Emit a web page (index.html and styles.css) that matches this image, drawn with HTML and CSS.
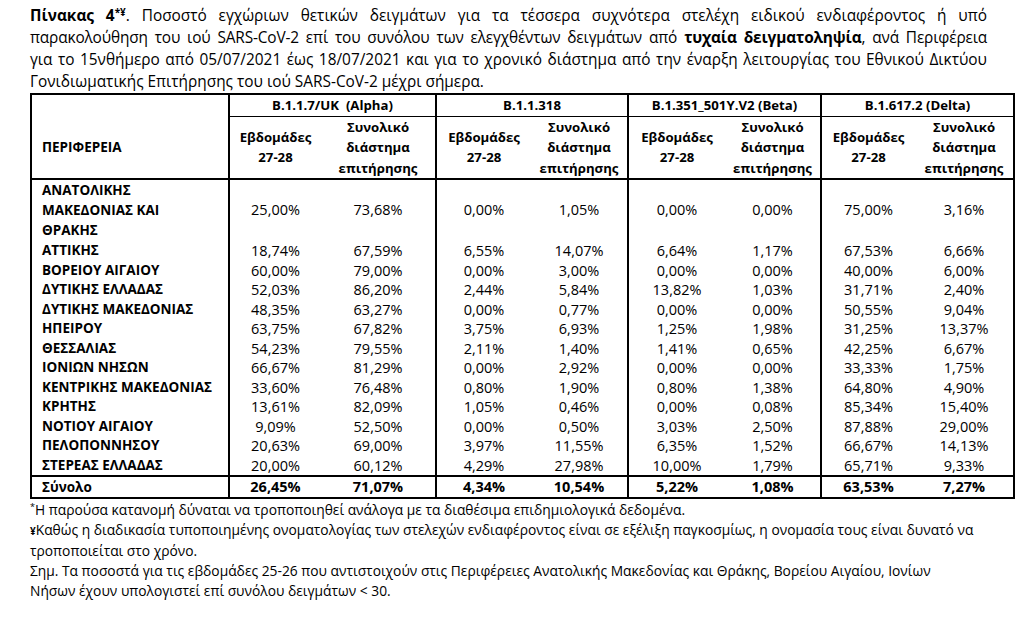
FILE: index.html
```html
<!DOCTYPE html>
<html lang="el">
<head>
<meta charset="utf-8">
<title>Πίνακας 4</title>
<link rel="stylesheet" href="styles.css">
</head>
<body>
<div class="page">
  <p class="title">
    <span class="tl"><b>Πίνακας 4<sup>*¥</sup></b>. Ποσοστό εγχώριων θετικών δειγμάτων για τα τέσσερα συχνότερα στελέχη ειδικού ενδιαφέροντος ή υπό</span>
    <span class="tl tight">παρακολούθηση του ιού SARS-CoV-2 επί του συνόλου των ελεγχθέντων δειγμάτων από <b>τυχαία δειγματοληψία</b>, ανά Περιφέρεια</span>
    <span class="tl">για το 15νθήμερο από 05/07/2021 έως 18/07/2021 και για το χρονικό διάστημα από την έναρξη λειτουργίας του Εθνικού Δικτύου</span>
    <span class="tl last">Γονιδιωματικής Επιτήρησης του ιού SARS-CoV-2 μέχρι σήμερα.</span>
  </p>
  <table class="data">
    <colgroup>
      <col class="c-reg">
      <col class="c-a1"><col class="c-a2">
      <col class="c-b1"><col class="c-b2">
      <col class="c-c1"><col class="c-c2">
      <col class="c-d1"><col class="c-d2">
    </colgroup>
    <thead>
      <tr class="grp">
        <th rowspan="2" class="reg-h">ΠΕΡΙΦΕΡΕΙΑ</th>
        <th colspan="2" class="gsep">B.1.1.7/UK&nbsp; (Alpha)</th>
        <th colspan="2" class="gsep">B.1.1.318</th>
        <th colspan="2" class="gsep">B.1.351_501Y.V2 (Beta)</th>
        <th colspan="2" class="gsep">B.1.617.2 (Delta)</th>
      </tr>
      <tr class="sub">
        <th class="gsep">Εβδομάδες<br>27-28</th><th>Συνολικό<br>διάστημα<br>επιτήρησης</th>
        <th class="gsep">Εβδομάδες<br>27-28</th><th>Συνολικό<br>διάστημα<br>επιτήρησης</th>
        <th class="gsep">Εβδομάδες<br>27-28</th><th>Συνολικό<br>διάστημα<br>επιτήρησης</th>
        <th class="gsep">Εβδομάδες<br>27-28</th><th>Συνολικό<br>διάστημα<br>επιτήρησης</th>
      </tr>
    </thead>
    <tbody>
      <tr class="first"><th>ΑΝΑΤΟΛΙΚΗΣ<br>ΜΑΚΕΔΟΝΙΑΣ ΚΑΙ<br>ΘΡΑΚΗΣ</th><td class="gsep">25,00%</td><td>73,68%</td><td class="gsep">0,00%</td><td>1,05%</td><td class="gsep">0,00%</td><td>0,00%</td><td class="gsep">75,00%</td><td>3,16%</td></tr>
      <tr><th>ΑΤΤΙΚΗΣ</th><td class="gsep">18,74%</td><td>67,59%</td><td class="gsep">6,55%</td><td>14,07%</td><td class="gsep">6,64%</td><td>1,17%</td><td class="gsep">67,53%</td><td>6,66%</td></tr>
      <tr><th>ΒΟΡΕΙΟΥ ΑΙΓΑΙΟΥ</th><td class="gsep">60,00%</td><td>79,00%</td><td class="gsep">0,00%</td><td>3,00%</td><td class="gsep">0,00%</td><td>0,00%</td><td class="gsep">40,00%</td><td>6,00%</td></tr>
      <tr><th>ΔΥΤΙΚΗΣ ΕΛΛΑΔΑΣ</th><td class="gsep">52,03%</td><td>86,20%</td><td class="gsep">2,44%</td><td>5,84%</td><td class="gsep">13,82%</td><td>1,03%</td><td class="gsep">31,71%</td><td>2,40%</td></tr>
      <tr><th>ΔΥΤΙΚΗΣ ΜΑΚΕΔΟΝΙΑΣ</th><td class="gsep">48,35%</td><td>63,27%</td><td class="gsep">0,00%</td><td>0,77%</td><td class="gsep">0,00%</td><td>0,00%</td><td class="gsep">50,55%</td><td>9,04%</td></tr>
      <tr><th>ΗΠΕΙΡΟΥ</th><td class="gsep">63,75%</td><td>67,82%</td><td class="gsep">3,75%</td><td>6,93%</td><td class="gsep">1,25%</td><td>1,98%</td><td class="gsep">31,25%</td><td>13,37%</td></tr>
      <tr><th>ΘΕΣΣΑΛΙΑΣ</th><td class="gsep">54,23%</td><td>79,55%</td><td class="gsep">2,11%</td><td>1,40%</td><td class="gsep">1,41%</td><td>0,65%</td><td class="gsep">42,25%</td><td>6,67%</td></tr>
      <tr><th>ΙΟΝΙΩΝ ΝΗΣΩΝ</th><td class="gsep">66,67%</td><td>81,29%</td><td class="gsep">0,00%</td><td>2,92%</td><td class="gsep">0,00%</td><td>0,00%</td><td class="gsep">33,33%</td><td>1,75%</td></tr>
      <tr><th>ΚΕΝΤΡΙΚΗΣ ΜΑΚΕΔΟΝΙΑΣ</th><td class="gsep">33,60%</td><td>76,48%</td><td class="gsep">0,80%</td><td>1,90%</td><td class="gsep">0,80%</td><td>1,38%</td><td class="gsep">64,80%</td><td>4,90%</td></tr>
      <tr><th>ΚΡΗΤΗΣ</th><td class="gsep">13,61%</td><td>82,09%</td><td class="gsep">1,05%</td><td>0,46%</td><td class="gsep">0,00%</td><td>0,08%</td><td class="gsep">85,34%</td><td>15,40%</td></tr>
      <tr><th>ΝΟΤΙΟΥ ΑΙΓΑΙΟΥ</th><td class="gsep">9,09%</td><td>52,50%</td><td class="gsep">0,00%</td><td>0,50%</td><td class="gsep">3,03%</td><td>2,50%</td><td class="gsep">87,88%</td><td>29,00%</td></tr>
      <tr><th>ΠΕΛΟΠΟΝΝΗΣΟΥ</th><td class="gsep">20,63%</td><td>69,00%</td><td class="gsep">3,97%</td><td>11,55%</td><td class="gsep">6,35%</td><td>1,52%</td><td class="gsep">66,67%</td><td>14,13%</td></tr>
      <tr><th>ΣΤΕΡΕΑΣ ΕΛΛΑΔΑΣ</th><td class="gsep">20,00%</td><td>60,12%</td><td class="gsep">4,29%</td><td>27,98%</td><td class="gsep">10,00%</td><td>1,79%</td><td class="gsep">65,71%</td><td>9,33%</td></tr>
    </tbody>
    <tfoot>
      <tr class="total"><th>Σύνολο</th><td class="gsep">26,45%</td><td>71,07%</td><td class="gsep">4,34%</td><td>10,54%</td><td class="gsep">5,22%</td><td>1,08%</td><td class="gsep">63,53%</td><td>7,27%</td></tr>
    </tfoot>
  </table>
  <div class="notes">
    <p><sup>*</sup>Η παρούσα κατανομή δύναται να τροποποιηθεί ανάλογα με τα διαθέσιμα επιδημιολογικά δεδομένα.</p>
    <p><span class="yen">¥</span>Καθώς η διαδικασία τυποποιημένης ονοματολογίας των στελεχών ενδιαφέροντος είναι σε εξέλιξη παγκοσμίως, η ονομασία τους είναι δυνατό να<br>τροποποιείται στο χρόνο.</p>
    <p>Σημ. Τα ποσοστά για τις εβδομάδες 25-26 που αντιστοιχούν στις Περιφέρειες Ανατολικής Μακεδονίας και Θράκης, Βορείου Αιγαίου, Ιονίων<br>Νήσων έχουν υπολογιστεί επί συνόλου δειγμάτων &lt; 30.</p>
  </div>
</div>
</body>
</html>
```
FILE: styles.css
```css
html, body {
  margin: 0;
  padding: 0;
  background: #fff;
}
body {
  font-family: "Open Sans", "Noto Sans", "DejaVu Sans", sans-serif;
  color: #000;
}
.page {
  padding: 5px 0 0 30px;
  width: 983px;
}
.title {
  margin: 0;
  width: 957px;
  font-size: 15.4px;
  line-height: 22px;
}
.tl {
  display: block;
  white-space: nowrap;
  text-align: justify;
  text-align-last: justify;
}
.tl.tight {
  letter-spacing: -0.15px;
}
.tl.last {
  text-align-last: left;
}
.title sup {
  font-size: 10px;
  line-height: 0;
  vertical-align: 5px;
}
.data {
  border-collapse: collapse;
  table-layout: fixed;
  width: 983px;
  border: 2px solid #000;
  font-size: 14.5px;
}
.c-reg { width: 198px; }
.c-a1 { width: 92px; }
.c-a2 { width: 115px; }
.c-b1 { width: 95px; }
.c-b2 { width: 97px; }
.c-c1 { width: 97px; }
.c-c2 { width: 96px; }
.c-d1 { width: 94px; }
.c-d2 { width: 99px; }
.data th, .data td {
  padding: 0;
  text-align: center;
  vertical-align: middle;
}
.data thead th {
  font-size: 13.2px;
  font-weight: 700;
  line-height: 20.5px;
}
.data .gsep {
  border-left: 2px solid #000;
}
.grp th {
  height: 18px;
  line-height: 18px;
  border-bottom: 1px solid #000;
}
.sub th {
  height: 60px;
  border-bottom: 2px solid #000;
}
.data thead .reg-h {
  text-align: left;
  padding: 22px 0 0 10px;
  font-size: 13.5px;
  vertical-align: middle;
  border-bottom: 2px solid #000;
}
.data tbody th, .data tfoot th {
  text-align: left;
  padding-left: 10px;
  font-size: 13.5px;
  font-weight: 700;
}
.data tbody th, .data tbody td {
  line-height: 19.5px;
}
.data tbody tr.first th, .data tbody tr.first td {
  line-height: 20px;
  padding-bottom: 1px;
}
.total th, .total td {
  border-top: 2px solid #000;
  height: 20px;
  line-height: 20px;
  font-weight: 700;
}
.notes {
  padding-top: 1px;
  font-size: 13.8px;
  line-height: 19.7px;
}
.notes p {
  margin: 0;
}
.notes sup {
  font-size: 9px;
  line-height: 0;
  vertical-align: 5px;
}
.yen {
  font-size: 10px;
  font-weight: 700;
}
```
